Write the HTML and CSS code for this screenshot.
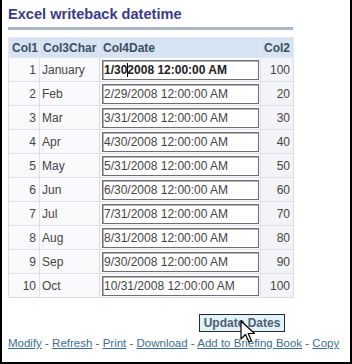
FILE: index.html
```html
<!DOCTYPE html>
<html>
<head>
<meta charset="utf-8">
<link rel="stylesheet" href="styles.css">
</head>
<body>
<div class="frame">
  <h1 class="title">Excel writeback datetime</h1>
  <div class="rule"></div>
  <table class="grid">
    <colgroup><col class="c1"><col class="c2"><col class="c3"><col class="c4"></colgroup>
    <thead>
      <tr><th class="num">Col1</th><th>Col3Char</th><th>Col4Date</th><th class="num">Col2</th></tr>
    </thead>
    <tbody>
      <tr><td class="num">1</td><td>January</td><td><div class="inp bold">1/30<span class="caret"></span>2008 12:00:00 AM</div></td><td class="num">100</td></tr>
      <tr><td class="num">2</td><td>Feb</td><td><div class="inp">2/29/2008 12:00:00 AM</div></td><td class="num">20</td></tr>
      <tr><td class="num">3</td><td>Mar</td><td><div class="inp">3/31/2008 12:00:00 AM</div></td><td class="num">30</td></tr>
      <tr><td class="num">4</td><td>Apr</td><td><div class="inp">4/30/2008 12:00:00 AM</div></td><td class="num">40</td></tr>
      <tr><td class="num">5</td><td>May</td><td><div class="inp">5/31/2008 12:00:00 AM</div></td><td class="num">50</td></tr>
      <tr><td class="num">6</td><td>Jun</td><td><div class="inp">6/30/2008 12:00:00 AM</div></td><td class="num">60</td></tr>
      <tr><td class="num">7</td><td>Jul</td><td><div class="inp">7/31/2008 12:00:00 AM</div></td><td class="num">70</td></tr>
      <tr><td class="num">8</td><td>Aug</td><td><div class="inp">8/31/2008 12:00:00 AM</div></td><td class="num">80</td></tr>
      <tr><td class="num">9</td><td>Sep</td><td><div class="inp">9/30/2008 12:00:00 AM</div></td><td class="num">90</td></tr>
      <tr><td class="num">10</td><td>Oct</td><td><div class="inp">10/31/2008 12:00:00 AM</div></td><td class="num">100</td></tr>
    </tbody>
  </table>
  <div class="actions">
    <span class="btn">Update Dates</span>
    <svg class="cursor" width="16" height="24" viewBox="0 0 16 24"><path d="M1 1 L1 19 L5.5 14.5 L9 22 L11.5 21 L8.2 13.5 L14.5 13.5 Z" fill="#fff" stroke="#000" stroke-width="1.2" stroke-linejoin="round"/></svg>
  </div>
  <div class="links">
    <a>Modify</a> - <a>Refresh</a> - <a>Print</a> - <a>Download</a> - <a>Add to Briefing Book</a> - <a>Copy</a>
  </div>
</div>
</body>
</html>
```

FILE: styles.css
```css
html, body {
  margin: 0;
  padding: 0;
  background: #fff;
}
.frame {
  position: relative;
  box-sizing: border-box;
  width: 352px;
  height: 364px;
  border-left: 2px solid #000;
  border-right: 2px solid #000;
  border-bottom: 2px solid #000;
  padding: 6px 0 0 6px;
  font-family: "Liberation Sans", Arial, sans-serif;
  font-size: 12px;
  color: #333;
}
.title {
  margin: 0;
  font-size: 14.6px;
  font-weight: bold;
  color: #3b3b8a;
  line-height: 17px;
}
.rule {
  width: 285px;
  height: 3px;
  background: #a8b8cb;
  margin-top: 4px;
}
.grid {
  margin-top: 7px;
  border-collapse: collapse;
  width: 285px;
  table-layout: fixed;
  border: 1px solid #d7dbe3;
}
.c1 { width: 31px; }
.c2 { width: 60px; }
.c3 { width: 161px; }
.c4 { width: 33px; }
.grid th {
  background: #d5e3f3;
  color: #3d4f60;
  font-weight: bold;
  text-align: left;
  height: 20px;
  padding: 0 3px 0 3px;
  border: 1px solid #e2e8f0;
  box-sizing: border-box;
}
.grid td {
  height: 24px;
  padding: 0 2px 0 2px;
  border: 1px solid #dcdfe6;
  background: #fafafc;
  color: #444;
  box-sizing: border-box;
  white-space: nowrap;
}
.grid td:nth-child(4) { background: #f3f4f8; }
.grid .num { text-align: right; padding-right: 3px; }
.grid td:nth-child(3) { padding: 0 1px 0 2px; }
.inp {
  box-sizing: border-box;
  width: 157px;
  height: 20px;
  line-height: 16px;
  border: 1px solid #6e6e6e;
  box-shadow: inset 1px 1px 0 #b5b5b5;
  background: #fff;
  padding: 1px 1px;
  color: #444;
  overflow: hidden;
}
.inp.bold { font-weight: bold; color: #222; }
.caret {
  display: inline-block;
  width: 1px;
  height: 14px;
  background: #000;
  vertical-align: -3px;
  margin: 0 -1px 0 0;
}
.actions {
  position: relative;
  display: flex;
  padding: 16px 0 0 191px;
  height: 18px;
}
.btn {
  box-sizing: border-box;
  width: 86px;
  height: 18px;
  border: 1px solid #2b2b2b;
  background: #dff3f8;
  color: #4f6070;
  font-weight: bold;
  text-align: center;
  line-height: 16px;
}
.cursor {
  position: absolute;
  left: 232px;
  top: 22px;
}
.links {
  margin-top: 5px;
  color: #555;
  font-size: 11.5px;
  white-space: nowrap;
}
.links a {
  color: #3b6f90;
  text-decoration: underline;
}
```
